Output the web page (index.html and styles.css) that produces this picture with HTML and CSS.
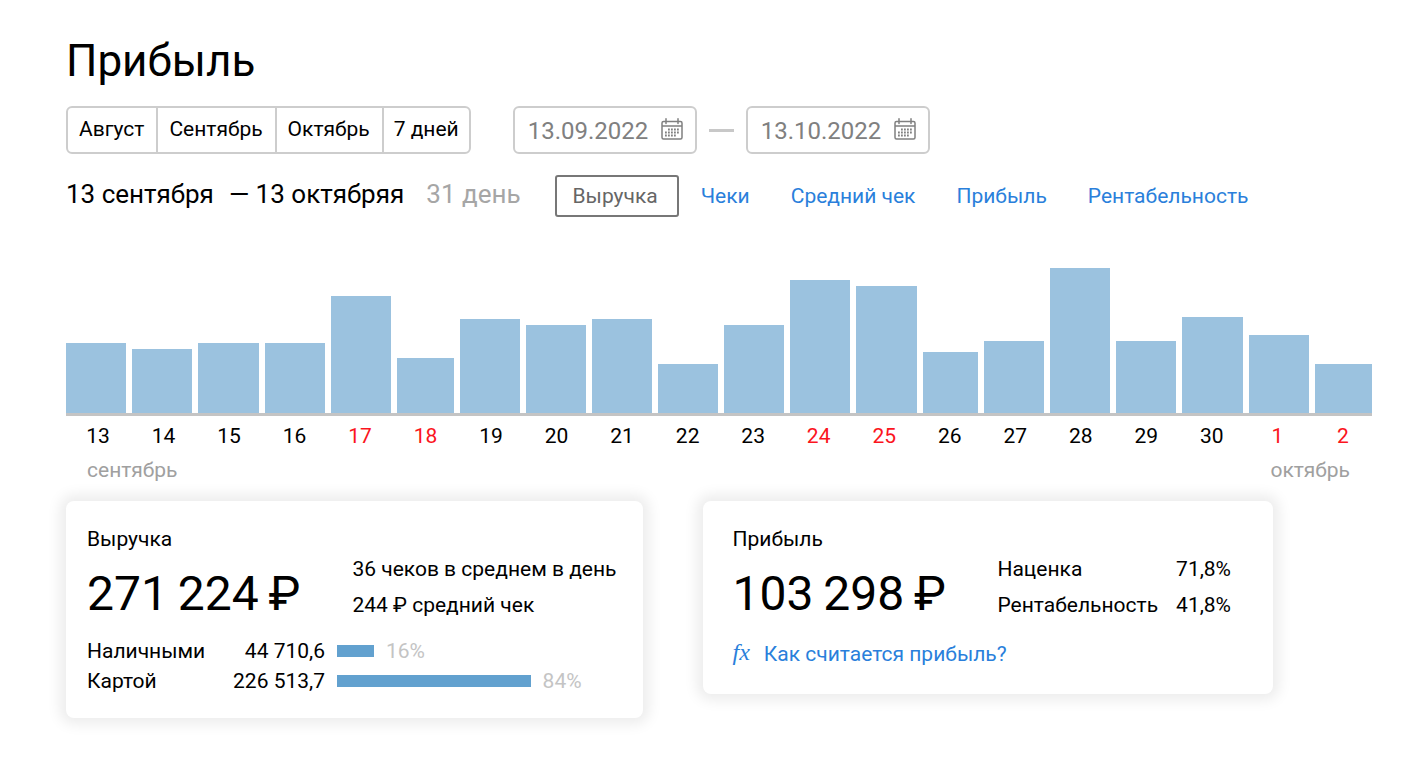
FILE: index.html
```
<!DOCTYPE html>
<html lang="ru">
<head>
<meta charset="utf-8">
<title>Прибыль</title>
<link rel="stylesheet" href="styles.css">
</head>
<body>
<svg width="0" height="0" class="sprite" aria-hidden="true">
  <symbol id="calendar" viewBox="0 0 22 22">
    <path d="M2.500 3.500h17a1.500 1.500 0 0 1 1.500 1.500v14.500a1.500 1.500 0 0 1-1.500 1.500h-17A1.500 1.500 0 0 1 1 19.500V5a1.500 1.500 0 0 1 1.500-1.500zM1 8h20M5 .8v4.700M17 .8v4.700" fill="none" stroke="currentColor" stroke-width="1.500" stroke-linecap="round"/>
    <path d="M7 11.500h12M4 14.500h15M4 17.500h12" fill="none" stroke="currentColor" stroke-width="1.800" stroke-dasharray="1.800 1.200"/>
  </symbol>
</svg>
<main class="page">
  <h1 class="title">Прибыль</h1>

  <div class="filters">
    <div class="presets">
      <button class="preset" type="button">Август</button>
      <button class="preset" type="button">Сентябрь</button>
      <button class="preset" type="button">Октябрь</button>
      <button class="preset" type="button">7 дней</button>
    </div>
    <div class="range">
      <div class="date">
        <input class="date-input" type="text" value="13.09.2022" aria-label="Начало периода">
        <button class="date-button" type="button" aria-label="Открыть календарь начала"><svg class="icon"><use href="#calendar"/></svg></button>
      </div>
      <span class="dash"></span>
      <div class="date">
        <input class="date-input" type="text" value="13.10.2022" aria-label="Конец периода">
        <button class="date-button" type="button" aria-label="Открыть календарь конца"><svg class="icon"><use href="#calendar"/></svg></button>
      </div>
    </div>
  </div>

  <div class="period">
    <h2 class="period-name"><span>13 сентября</span><span>— 13 октябряя</span><span class="period-days">31 день</span></h2>
    <nav class="tabs">
      <button class="tab-active" type="button">Выручка</button>
      <a class="tab" href="#checks">Чеки</a>
      <a class="tab" href="#average">Средний чек</a>
      <a class="tab" href="#profit">Прибыль</a>
      <a class="tab" href="#margin">Рентабельность</a>
    </nav>
  </div>

  <section class="chart">
    <div class="bars">
      <i class="bar" style="height:48%;flex-grow:60"></i>
      <i class="bar" style="height:44%;flex-grow:60"></i>
      <i class="bar" style="height:48%;flex-grow:60"></i>
      <i class="bar" style="height:48%;flex-grow:60"></i>
      <i class="bar" style="height:81%;flex-grow:60"></i>
      <i class="bar" style="height:38%;flex-grow:57"></i>
      <i class="bar" style="height:64.500%;flex-grow:60"></i>
      <i class="bar" style="height:60.500%;flex-grow:59"></i>
      <i class="bar" style="height:64.500%;flex-grow:60"></i>
      <i class="bar" style="height:33.500%;flex-grow:60"></i>
      <i class="bar" style="height:60.500%;flex-grow:60"></i>
      <i class="bar" style="height:91.500%;flex-grow:60"></i>
      <i class="bar" style="height:87.500%;flex-grow:60"></i>
      <i class="bar" style="height:42%;flex-grow:55"></i>
      <i class="bar" style="height:50%;flex-grow:60"></i>
      <i class="bar" style="height:100%;flex-grow:60"></i>
      <i class="bar" style="height:50%;flex-grow:60"></i>
      <i class="bar" style="height:66.500%;flex-grow:60"></i>
      <i class="bar" style="height:54%;flex-grow:60"></i>
      <i class="bar" style="height:33.500%;flex-grow:57"></i>
    </div>
    <div class="days">
      <span class="day">13</span><span class="day">14</span><span class="day">15</span><span class="day">16</span><span class="day day-off">17</span><span class="day day-off">18</span><span class="day">19</span><span class="day">20</span><span class="day">21</span><span class="day">22</span><span class="day">23</span><span class="day day-off">24</span><span class="day day-off">25</span><span class="day">26</span><span class="day">27</span><span class="day">28</span><span class="day">29</span><span class="day">30</span><span class="day day-off">1</span><span class="day day-off">2</span>
    </div>
    <div class="months"><span>сентябрь</span><span>октябрь</span></div>
  </section>

  <div class="cards">
    <section class="card">
      <h3 class="card-title">Выручка</h3>
      <div class="summary">
        <p class="amount">271&thinsp;224&thinsp;₽</p>
        <div class="facts">
          <p>36 чеков в среднем в день</p>
          <p>244 ₽ средний чек</p>
        </div>
      </div>
      <table class="payments">
        <tr><th class="pay-name" scope="row">Наличными</th><td class="pay-sum">44 710,6</td><td class="pay-share"><div class="share"><i class="share-bar" style="width:16%"></i><span>16%</span></div></td></tr>
        <tr><th class="pay-name" scope="row">Картой</th><td class="pay-sum">226 513,7</td><td class="pay-share"><div class="share"><i class="share-bar" style="width:84%"></i><span>84%</span></div></td></tr>
      </table>
    </section>
    <section class="card card-profit">
      <h3 class="card-title">Прибыль</h3>
      <div class="summary summary-profit">
        <p class="amount">103&thinsp;298&thinsp;₽</p>
        <table class="rates">
          <tr><th class="rate-name" scope="row">Наценка</th><td class="rate">71,8%</td></tr>
          <tr><th class="rate-name" scope="row">Рентабельность</th><td class="rate">41,8%</td></tr>
        </table>
      </div>
      <a class="help" href="#help"><span class="fx">fx</span>Как считается прибыль?</a>
    </section>
  </div>
</main>
</body>
</html>
```
FILE: styles.css
```
* { box-sizing: border-box; }
body {
  margin: 0;
  background: #fff;
  color: #000;
  font-family: Roboto, "Noto Sans", sans-serif;
  font-size: 21px;
  line-height: 30px;
}
h1, h2, h3, p { margin: 0; font-weight: 400; }
button, input { font: inherit; }
a { color: #2a7fdb; text-decoration: none; }
.sprite { position: absolute; }
.page { padding: 33px 46px 44px 66px; }
.title { font-size: 44px; line-height: 56px; }

.filters { display: flex; align-items: center; gap: 42px; margin-top: 17px; }
.presets { display: flex; height: 48px; border: 2px solid #cdcdcd; border-radius: 6px; }
.preset {
  padding: 0 12px 2px 11px;
  border: 0;
  border-left: 2px solid #cdcdcd;
  background: none;
  color: #000;
}
.preset:first-child { border-left: 0; }
.preset:last-child { padding: 0 10px 2px; }
.range { display: flex; align-items: center; gap: 12px; }
.date {
  display: flex;
  align-items: center;
  justify-content: space-between;
  width: 184px;
  height: 48px;
  padding: 0 12px 0 13px;
  border: 2px solid #cdcdcd;
  border-radius: 6px;
}
.date-input {
  width: 124px;
  padding: 2px 0 0;
  border: 0;
  outline: 0;
  background: none;
  color: #808080;
  font-size: 24px;
}
.date-button { display: flex; padding: 0 0 3px; border: 0; background: none; color: #808080; }
.icon { width: 22px; height: 22px; }
.dash { width: 25px; height: 3px; background: #c8c8c8; }

.period { display: flex; align-items: center; gap: 34px; margin-top: 21px; }
.period-name { display: flex; gap: 15px; padding-bottom: 4px; font-size: 26px; white-space: nowrap; }
.period-days { margin-left: 7px; color: #a6a6a6; }
.tabs { display: flex; align-items: center; white-space: nowrap; }
.tab-active {
  height: 42px;
  margin-right: 22px;
  padding: 0 19px 1px 16px;
  border: 2px solid #777;
  border-radius: 3px;
  background: none;
  color: #666;
}
.tab { margin-right: 41px; }

.chart { margin-top: 51px; }
.bars { display: flex; align-items: flex-end; gap: 6px; height: 148px; border-bottom: 3px solid #c4c4c4; }
.bar { flex: 1 1 0; background: #9bc2df; }
.days { display: flex; justify-content: space-between; margin-top: 5px; padding: 0 17px 0 20px; }
.day { width: 24px; text-align: center; }
.day-off { color: #fb1420; }
.months { display: flex; justify-content: space-between; margin-top: 4px; padding: 0 22px 0 21px; color: #a0a0a0; }

.cards {
  display: grid;
  grid-template-columns: 576fr 570fr;
  align-items: start;
  gap: 60px;
  margin-top: 16px;
  padding-right: 99px;
}
.card { padding: 23px 21px 22px; border-radius: 8px; background: #fff; box-shadow: 0 0 14px 6px rgba(0, 0, 0, 0.08); }
.card-profit { padding: 23px 30px 25px; }
.card-title { font-size: 21px; }
.summary { display: flex; justify-content: space-between; align-items: flex-start; padding-right: 5px; white-space: nowrap; }
.summary-profit { padding-right: 12px; }
.amount { padding-top: 10px; font-size: 48px; line-height: 60px; }
.facts { display: grid; gap: 6px; }
table { border-collapse: collapse; }
th, td { padding: 0; font-weight: 400; text-align: left; }
.payments { width: 100%; margin-top: 12px; }
.pay-name { width: 126px; }
.pay-sum { width: 112px; text-align: right; white-space: nowrap; }
.pay-share { padding: 0 54px 0 12px; }
.share { display: flex; align-items: center; gap: 12px; color: #c4c4c4; }
.share-bar { flex: none; height: 12px; background: #62a1cf; }
.rate-name { padding: 0 18px 6px 0; }
.rate { padding-bottom: 6px; text-align: right; }
.help { display: flex; gap: 14px; margin-top: 13px; }
.fx { font-family: "Liberation Serif", serif; font-style: italic; font-size: 24px; line-height: 26px; }
```
